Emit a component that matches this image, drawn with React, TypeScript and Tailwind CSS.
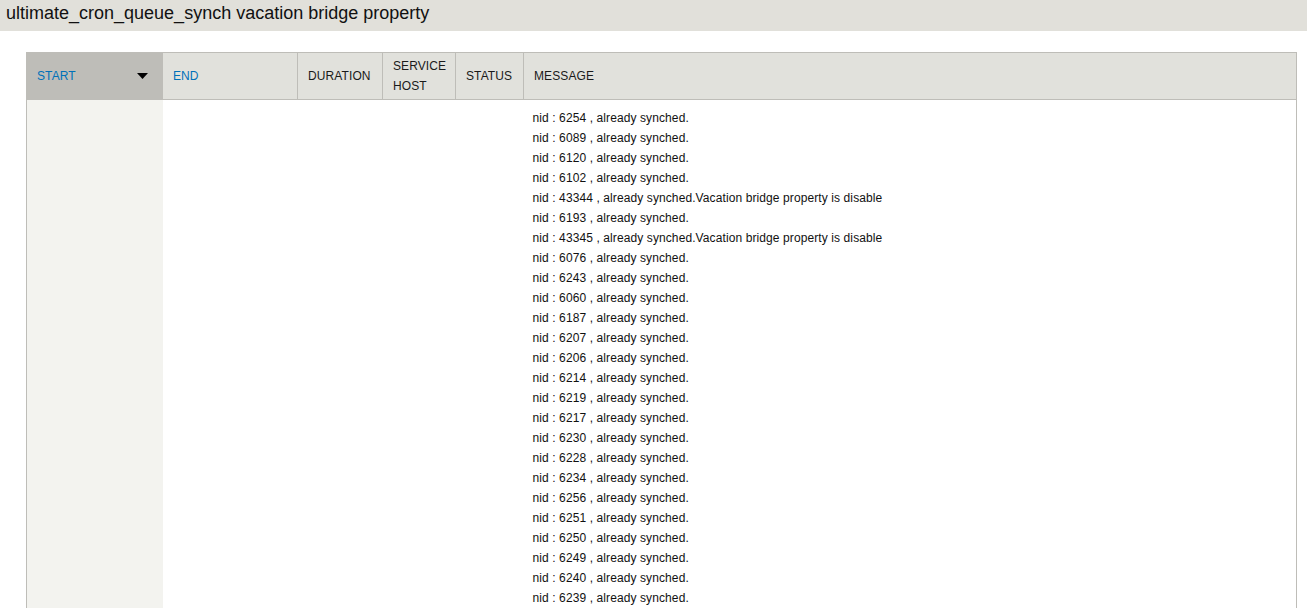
import React from 'react';

const messages = [
  'nid : 6254 , already synched.',
  'nid : 6089 , already synched.',
  'nid : 6120 , already synched.',
  'nid : 6102 , already synched.',
  'nid : 43344 , already synched.Vacation bridge property is disable',
  'nid : 6193 , already synched.',
  'nid : 43345 , already synched.Vacation bridge property is disable',
  'nid : 6076 , already synched.',
  'nid : 6243 , already synched.',
  'nid : 6060 , already synched.',
  'nid : 6187 , already synched.',
  'nid : 6207 , already synched.',
  'nid : 6206 , already synched.',
  'nid : 6214 , already synched.',
  'nid : 6219 , already synched.',
  'nid : 6217 , already synched.',
  'nid : 6230 , already synched.',
  'nid : 6228 , already synched.',
  'nid : 6234 , already synched.',
  'nid : 6256 , already synched.',
  'nid : 6251 , already synched.',
  'nid : 6250 , already synched.',
  'nid : 6249 , already synched.',
  'nid : 6240 , already synched.',
  'nid : 6239 , already synched.',
];

const App = () => {
  return (
    <div className="h-[608px] overflow-hidden bg-white font-['Liberation_Sans',Arial,sans-serif] text-[#111]">
      <h1 className="h-[31px] bg-[#e1e0da] pl-[6px] text-[18px] leading-[26px] font-normal">
        ultimate_cron_queue_synch vacation bridge property
      </h1>

      <div className="ml-[26px] mr-[10px] mt-[21px]">
        <table className="w-[1271px] table-fixed border-collapse border border-[#bebdb8] text-[12px] tracking-[0.1px]">
          <colgroup>
            <col className="w-[136px]" />
            <col className="w-[135px]" />
            <col className="w-[85px]" />
            <col className="w-[73px]" />
            <col className="w-[68px]" />
            <col />
          </colgroup>
          <thead>
            <tr className="h-[47px] bg-[#e1e1dc] text-left uppercase leading-[20px]">
              <th className="border border-[#bebdb8] bg-[#bebdb8] pl-[10px] pr-[14px] font-normal text-[#0071b9]">
                <div className="flex items-center justify-between">
                  <span>Start</span>
                  <svg width="11" height="6" viewBox="0 0 11 6">
                    <path d="M0 0h11L5.5 6z" fill="#000" />
                  </svg>
                </div>
              </th>
              <th className="border border-[#bebdb8] pl-[10px] font-normal text-[#0071b9]">End</th>
              <th className="border border-[#bebdb8] pl-[10px] font-normal text-[#1a1a1a]">Duration</th>
              <th className="border border-[#bebdb8] py-[3px] pl-[10px] font-normal text-[#1a1a1a]">
                Service
                <br />
                Host
              </th>
              <th className="border border-[#bebdb8] pl-[10px] font-normal text-[#1a1a1a]">Status</th>
              <th className="border border-[#bebdb8] pl-[10px] font-normal text-[#1a1a1a]">Message</th>
            </tr>
          </thead>
          <tbody>
            <tr className="align-top">
              <td className="bg-[#f3f3ef]" />
              <td />
              <td />
              <td />
              <td />
              <td className="pl-[9px] pt-[8px] leading-[20px] text-[#111]">
                {messages.map((m, i) => (
                  <div key={i}>{m}</div>
                ))}
              </td>
            </tr>
          </tbody>
        </table>
      </div>
    </div>
  );
};

export default App;
